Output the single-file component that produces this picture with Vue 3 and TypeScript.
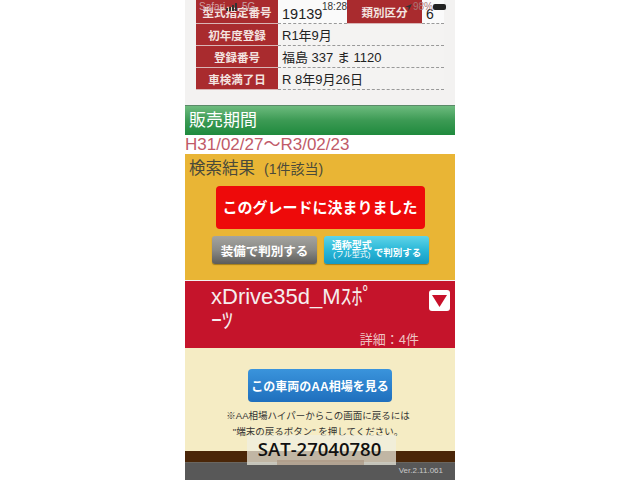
<script setup lang="ts">
const rows = [
  { label: '初年度登録', value: 'R1年9月' },
  { label: '登録番号', value: '福島 337 ま 1120' },
  { label: '車検満了日', value: 'R 8年9月26日' },
]
</script>

<template>
  <div class="page">
    <div class="phone">
      <div class="status">
        <span class="carrier">Safari</span>
        <span class="bars"><i></i><i></i><i></i><i></i></span>
        <span class="net">5G</span>
        <span class="clock">18:28</span>
        <svg class="loc" width="7" height="7" viewBox="0 0 8 8"><path d="M8 0 0 3.5h4V8z" fill="#333" /></svg>
        <span class="pct">98%</span>
        <span class="batt"><b></b></span>
      </div>

      <section class="specs">
        <div class="row first">
          <div class="label">型式指定番号</div>
          <div class="value num">19139</div>
          <div class="label small">類別区分</div>
          <div class="value last">6</div>
        </div>
        <div v-for="r in rows" :key="r.label" class="row">
          <div class="label">{{ r.label }}</div>
          <div class="value">{{ r.value }}</div>
        </div>
      </section>

      <h2 class="green">販売期間</h2>
      <div class="period">H31/02/27～R3/02/23</div>

      <section class="result">
        <div class="result-title">検索結果<span>(1件該当)</span></div>
        <div class="decide">このグレードに決まりました</div>
        <div class="btns">
          <div class="btn gray">装備で判別する</div>
          <div class="btn cyan">
            <div class="stack"><span class="s1">通称型式</span><span class="s2">(フル型式)</span></div>
            <span class="s3">で判別する</span>
          </div>
        </div>
      </section>

      <section class="grade">
        <div class="grade-top">
          <div class="grade-name">xDrive35d_Mｽﾎﾟ<br />ｰﾂ</div>
          <div class="toggle"><svg width="15" height="12" viewBox="0 0 15 12"><path d="M0 0h15L7.5 12z" fill="#c8102a" /></svg></div>
        </div>
        <div class="detail">詳細：4件</div>
      </section>

      <section class="cream">
        <div class="aa">この車両のAA相場を見る</div>
        <p class="note">※AA相場ハイパーからこの画面に戻るには<br />"端末の戻るボタン" を押してください。</p>
      </section>

      <div class="brown"></div>
      <footer class="foot">Ver.2.11.061</footer>

      <div class="stamp">
        <span>SAT-27040780</span>
        <i></i>
      </div>
    </div>
  </div>
</template>

<style>
html, body { margin: 0; background: #fff; }
</style>

<style scoped>
.page {
  width: 640px;
  height: 480px;
  overflow: hidden;
  display: flex;
  justify-content: center;
  background: #fff;
  font-family: "Liberation Sans", "Noto Sans CJK JP", sans-serif;
}
.phone {
  position: relative;
  width: 270px;
  height: 480px;
  display: flex;
  flex-direction: column;
  background: #f3f2f1;
}
.status {
  position: absolute;
  top: 2px;
  left: 14px;
  width: 252px;
  height: 10px;
  font-size: 10px;
  line-height: 10px;
  color: #55444a;
  z-index: 2;
}
.status > * { position: absolute; }
.carrier { left: 0; color: #d0a0a4; }
.bars { left: 27px; top: 1px; display: flex; align-items: flex-end; gap: 1px; height: 8px; }
.bars i { width: 2px; background: #333; }
.bars i:nth-child(1) { height: 3px; }
.bars i:nth-child(2) { height: 4px; }
.bars i:nth-child(3) { height: 6px; }
.bars i:nth-child(4) { height: 8px; }
.net { left: 43px; color: #c8a4a8; }
.clock { left: 123px; color: #333; }
.loc { left: 206px; top: 2px; }
.pct { left: 214px; color: #a77; }
.batt {
  left: 234px;
  top: 2px;
  width: 15px;
  height: 6px;
  border-radius: 2px;
  background: #eee;
  display: block;
}
.batt b { display: block; width: 13px; height: 6px; border-radius: 2px; background: #222; }

.specs { height: 105px; padding: 0 11px; box-sizing: border-box; flex: none; }
.row {
  display: flex;
  height: 22px;
  width: 248px;
}
.row.first { height: 24px; }
.label {
  flex: none;
  width: 82px;
  background: #a92b2e;
  color: #f3e4e0;
  font-size: 11.5px;
  font-weight: 700;
  display: flex;
  align-items: center;
  justify-content: center;
  border-bottom: 1px solid #d9b5b5;
  box-sizing: border-box;
}
.row.first .label { align-items: flex-end; padding-bottom: 3px; white-space: nowrap; }
.label.small { width: 75px; }
.value {
  flex: 1;
  font-size: 13px;
  color: #222;
  padding-left: 4px;
  display: flex;
  align-items: center;
  border-bottom: 1px dashed #999;
  box-sizing: border-box;
  background: #f4f3f2;
}
.value.num { flex: none; width: 69px; font-size: 14.5px; background: #fafafa; padding-top: 5px; }
.value.last { flex: 1; font-size: 14px; padding-top: 5px; background: #fafafa; }

.green {
  margin: 0;
  flex: none;
  height: 30px;
  box-sizing: border-box;
  border-top: 1px solid #5a8a68;
  background: linear-gradient(#6dbb7e 0%, #3c9a54 50%, #1f8a3d 100%);
  color: #fff;
  font-size: 17px;
  line-height: 29px;
  font-weight: 400;
  padding-left: 4px;
}
.period {
  flex: none;
  height: 19px;
  background: #fff;
  color: #c05a68;
  font-size: 17px;
  line-height: 19px;
  padding-left: 0;
  white-space: nowrap;
}
.result {
  flex: none;
  height: 126px;
  box-sizing: border-box;
  background: #e9b535;
  padding-top: 4px;
  display: flex;
  flex-direction: column;
  align-items: center;
}
.result-title {
  align-self: flex-start;
  font-size: 16.5px;
  line-height: 20px;
  color: #4a4a3a;
  padding-left: 4px;
}
.result-title span { font-size: 14px; margin-left: 9px; }
.decide {
  margin-top: 7px;
  width: 209px;
  height: 43px;
  background: #ee0a0a;
  border-radius: 4px;
  color: #fff;
  font-size: 15px;
  font-weight: 700;
  line-height: 43px;
  text-align: center;
  white-space: nowrap;
}
.btns { display: flex; gap: 7px; margin-top: 7px; margin-left: 1px; }
.btn {
  height: 28px;
  border-radius: 3px;
  color: #fff;
  font-weight: 700;
  display: flex;
  align-items: center;
  justify-content: center;
  box-sizing: border-box;
  box-shadow: 0 1px 1px rgba(90, 70, 0, 0.5);
}
.gray {
  width: 105px;
  font-size: 12.5px;
  background: linear-gradient(#a4a4a0, #8a8a86 50%, #5c5c5a);
}
.cyan {
  width: 105px;
  background: linear-gradient(#5fd4e8, #2bb8d8 50%, #149ac4);
  gap: 2px;
}
.stack { display: flex; flex-direction: column; align-items: center; line-height: 1; }
.s1 { font-size: 10px; }
.s2 { font-size: 8px; font-weight: 400; }
.s3 { font-size: 9.5px; margin-top: 3px; }

.grade {
  flex: none;
  margin-top: 1px;
  height: 67px;
  box-sizing: border-box;
  background: #c5142b;
  color: #fff;
  position: relative;
}
.grade-top { display: flex; justify-content: space-between; padding: 4px 5px 0 26px; }
.grade-name { font-size: 22px; line-height: 24px; width: 200px; color: #f6eded; white-space: nowrap; }
.toggle {
  width: 21px;
  height: 21px;
  margin-top: 5px;
  background: #fff;
  border-radius: 3px;
  display: flex;
  align-items: center;
  justify-content: center;
}
.detail {
  position: absolute;
  right: 36px;
  bottom: 0;
  font-size: 13px;
  line-height: 16px;
  color: #eec4c4;
}
.cream {
  flex: 1;
  background: #f5ecc4;
  display: flex;
  flex-direction: column;
  align-items: center;
  padding-top: 21px;
  box-sizing: border-box;
}
.aa {
  width: 144px;
  height: 33px;
  border-radius: 4px;
  background: linear-gradient(#3a94dc, #1f6fbd);
  color: #fff;
  font-size: 12px;
  font-weight: 700;
  line-height: 36px;
  text-align: center;
  white-space: nowrap;
}
.note {
  margin: 6px 0 0;
  font-size: 9.5px;
  line-height: 16px;
  color: #333;
  text-align: center;
  white-space: nowrap;
  transform: translateX(-2px);
}
.brown { flex: none; height: 11px; background: #4a2608; }
.foot {
  flex: none;
  height: 18px;
  background: #585858;
  border-top: 1px solid #6a6660;
  box-sizing: border-box;
  color: #c8c8c8;
  font-size: 8px;
  line-height: 16px;
  text-align: right;
  padding-right: 12px;
}
.stamp {
  position: absolute;
  left: 62px;
  top: 435px;
  width: 145px;
  padding-right: 4px;
  height: 30px;
  background: rgba(240, 238, 225, 0.72);
  color: #111;
  font-size: 18.5px;
  font-family: "Open Sans", sans-serif;
  text-align: center;
  line-height: 28px;
}
.stamp span { font-weight: 600; }
.stamp i {
  position: absolute;
  left: 30px;
  bottom: 0;
  width: 87px;
  height: 5px;
  background: rgba(170, 150, 130, 0.7);
}
</style>
